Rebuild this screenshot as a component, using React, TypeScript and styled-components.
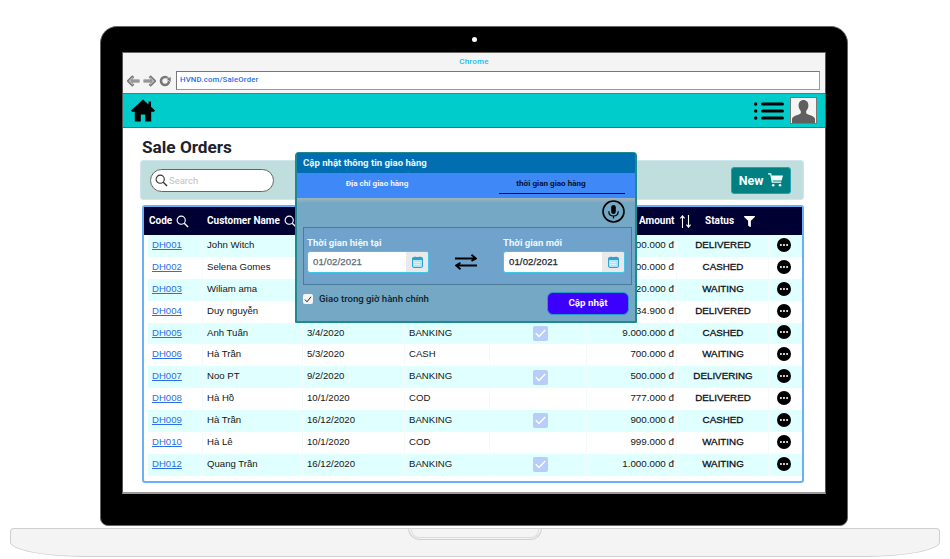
import React from "react";
import styled, { createGlobalStyle } from "styled-components";
import { FaFilter } from "react-icons/fa";

const Global = createGlobalStyle`
  html, body { margin: 0; padding: 0; background: #fff; }
  body { font-family: "Liberation Sans", Arial, sans-serif; overflow: hidden; }
  * { box-sizing: border-box; }
  svg { flex-shrink: 0; }
`;

const Stage = styled.div`
  width: 950px;
  height: 559px;
  padding-top: 26px;
  display: flex;
  flex-direction: column;
`;
const Laptop = styled.div`
  position: relative;
  width: 748px;
  height: 500px;
  margin-left: 100px;
  padding: 25px 21px 0;
  background: #000;
  border: 1px solid #666;
  border-radius: 17px 17px 8px 8px;
`;
const Camera = styled.span`
  position: absolute;
  left: 371px;
  top: 10px;
  width: 5px;
  height: 5px;
  border-radius: 50%;
  background: #fff;
`;
const Screen = styled.div`
  position: relative;
  width: 704px;
  height: 442px;
  background: #fff;
  border: 1px solid #555;
  border-bottom: 2px solid #999;
  border-top-color: #666;
  overflow: hidden;
`;
const BrowserBar = styled.div`
  height: 40px;
  background: #f4f4f4;
  display: flex;
  flex-direction: column;
`;
const BrowserTitle = styled.div`
  height: 18px;
  padding-top: 4px;
  text-align: center;
  font: 500 8px/9px Roboto, sans-serif;
  letter-spacing: 0.2px;
  color: #16bdf0;
`;
const AddressRow = styled.div`
  display: flex;
  align-items: center;
  gap: 2px;
  padding: 0 5px 0 4px;
`;
const NavGlyphs = styled.div`
  display: flex;
  align-items: center;
  gap: 3px;
  margin-right: 3px;
`;
const Address = styled.div`
  flex: 1;
  height: 19px;
  background: #fff;
  border: 1px solid #777;
  border-bottom: 1.5px solid #999;
  border-right-color: #999;
  padding-left: 3px;
  font: 500 7.8px/16px Roboto, sans-serif;
  letter-spacing: 0.15px;
  color: #1b6fe8;
`;
const Nav = styled.div`
  height: 35px;
  background: #00cccc;
  border-top: 1px solid #2b8c8c;
  border-bottom: 1px solid #2f7a7a;
  display: flex;
  align-items: center;
  justify-content: space-between;
  padding: 0 8px 0 8px;
`;
const NavRight = styled.div`
  display: flex;
  align-items: center;
  gap: 6px;
`;
const Avatar = styled.div`
  width: 27px;
  height: 27px;
  background: #f4f4f4;
  border: 1px solid #777;
  display: flex;
  overflow: hidden;
`;
const Main = styled.div`
  padding: 7px 21px 0 17px;
`;
const Title = styled.h1`
  margin: 0 0 1px 2px;
  height: 24px;
  font: 700 17.2px/24px Roboto, sans-serif;
  color: #1c2230;
`;
const Toolbar = styled.div`
  height: 40px;
  background: #bfdedd;
  border: 1px solid #cfe6ef;
  border-radius: 3px;
  display: flex;
  align-items: center;
  justify-content: space-between;
  padding: 0 12px 0 9px;
`;
const SearchBox = styled.div`
  width: 124px;
  height: 23px;
  background: #fff;
  border: 1px solid #666;
  border-radius: 12px;
  display: flex;
  align-items: center;
  gap: 1px;
  padding-left: 4px;
  font: 400 9.5px Roboto, sans-serif;
  color: #c0c0c0;
`;
const NewButton = styled.div`
  width: 60px;
  height: 27px;
  background: #008080;
  border: 1px solid #2b9fb0;
  border-radius: 3px;
  display: flex;
  align-items: center;
  justify-content: center;
  gap: 5px;
  font: 700 12.5px Roboto, sans-serif;
  color: #f2ffff;
`;
const TableBox = styled.div`
  margin: 5px 0 0 2px;
  height: 278px;
  width: 662px;
  border: 2px solid #6ab0f8;
  border-radius: 3px;
  background: #fff;
`;
const columns = "59px 100px 102px 85px 97px 90px 92px 33px";
const HeadRow = styled.div`
  display: grid;
  grid-template-columns: ${columns};
  height: 28px;
  background: #000033;
  color: #fff;
  font: 700 10px/28px Roboto, sans-serif;
`;
const HeadCell = styled.div<{ $pad?: number; $gap?: number }>`
  display: flex;
  align-items: center;
  gap: ${(p) => p.$gap ?? 4}px;
  padding-left: ${(p) => p.$pad ?? 0}px;
  white-space: nowrap;
`;
const Row = styled.div<{ $odd: boolean }>`
  display: grid;
  grid-template-columns: 55px 100px 102px 85px 97px 90px 92px 29px;
  height: 21.88px;
  margin-left: 4px;
  background: ${(p) => (p.$odd ? "#e0ffff" : "#fff")};
  font: 400 9.6px/20px "Liberation Sans", Arial, sans-serif;
  color: #151515;
`;
const Cell = styled.div<{ $pad?: number }>`
  padding-left: ${(p) => p.$pad ?? 4}px;
  border-right: 1px solid #f4f9f9;
  white-space: nowrap;
  overflow: hidden;
`;
const CodeLink = styled.a`
  color: #2a6fe6;
  text-decoration: underline;
`;
const CheckCell = styled(Cell)`
  display: flex;
  align-items: center;
  justify-content: center;
  padding: 0 0 0 5px;
`;
const CheckMark = styled.span`
  width: 15px;
  height: 15px;
  border-radius: 2px;
  background: #b9cdfb;
  display: flex;
  align-items: center;
  justify-content: center;
`;
const AmountCell = styled(Cell)`
  text-align: right;
  padding-right: 2px;
  padding-left: 0;
  font-size: 9.8px;
`;
const StatusCell = styled(Cell)`
  text-align: center;
  padding-left: 1px;
  font-size: 9.8px;
  -webkit-text-stroke: 0.3px #101018;
  color: #101018;
`;
const ActionCell = styled.div`
  display: flex;
  align-items: center;
  justify-content: center;
  padding-bottom: 2px;
`;

/* Modal overlay */
const Modal = styled.div`
  position: absolute;
  left: 172px;
  top: 99px;
  width: 342px;
  height: 171px;
  background: #74a8c4;
  border: 2px solid #1d8a90;
  border-top-width: 1px;
  border-radius: 4px 4px 1px 1px;
  display: flex;
  flex-direction: column;
`;
const ModalHead = styled.div`
  height: 20px;
  background: #006eb0;
  padding-left: 6px;
  font: 700 9.6px/20px Roboto, sans-serif;
  color: #e8f6ff;
`;
const Tabs = styled.div`
  height: 25px;
  background: #3f88f8;
  display: grid;
  grid-template-columns: 202px 126px;
`;
const Tab = styled.div<{ $active?: boolean }>`
  height: 21px;
  text-align: center;
  font: 700 8.1px/21px Roboto, sans-serif;
  padding-right: ${(p) => (p.$active ? 22 : 42)}px;
  color: ${(p) => (p.$active ? "#06122e" : "#f2f6ff")};
  border-bottom: ${(p) => (p.$active ? "1px solid #031030" : "none")};
`;
const ModalBody = styled.div`
  flex: 1;
  position: relative;
  padding: 2px 4px 0 6px;
  background: linear-gradient(#a3b4bd 0, #74a8c4 5px);
  display: flex;
  flex-direction: column;
`;
const MicRow = styled.div`
  display: flex;
  justify-content: flex-end;
  height: 27px;
  padding-right: 6px;
`;
const TimeBox = styled.div`
  height: 58px;
  width: 329px;
  background: #6fa3cc;
  border: 1px solid #4a7c98;
  padding: 8px 6px 0 3px;
  display: flex;
  justify-content: space-between;
  align-items: flex-start;
`;
const Field = styled.div`
  width: 122px;
`;
const FieldLabel = styled.div`
  font: 700 9.6px/14px Roboto, sans-serif;
  color: #eef6ff;
  margin-bottom: 1px;
`;
const DateInput = styled.div<{ $dim?: boolean }>`
  height: 22px;
  background: #fff;
  border: 1px solid #40c4e8;
  border-radius: 3px;
  display: flex;
  justify-content: space-between;
  padding-left: 5px;
  font: 400 9.6px/20px "Liberation Sans", Arial, sans-serif;
  letter-spacing: 0.1px;
  -webkit-text-stroke: 0.25px ${(p) => (p.$dim ? "#606a74" : "#1c2430")};
  color: ${(p) => (p.$dim ? "#606a74" : "#1c2430")};
  overflow: hidden;
`;
const CalendarAddon = styled.div`
  width: 22px;
  background: #e9e9e9;
  display: flex;
  align-items: center;
  justify-content: center;
`;
const SwapSlot = styled.div`
  align-self: center;
  margin-top: 4px;
  display: flex;
`;
const FootRow = styled.div`
  display: flex;
  justify-content: space-between;
  align-items: flex-start;
  padding: 7px 0 0 0;
`;
const CheckLabel = styled.label`
  display: flex;
  align-items: center;
  gap: 6px;
  font: 500 9.6px/14px Roboto, sans-serif;
  color: #10202e;
`;
const Tick = styled.span`
  width: 10px;
  height: 10px;
  background: #f4f4f4;
  border-radius: 2px;
  display: flex;
  align-items: center;
  justify-content: center;
`;
const UpdateButton = styled.div`
  width: 82px;
  height: 23px;
  background: #3c00ff;
  border: 1px solid #2a9ac4;
  border-radius: 6px;
  text-align: center;
  font: 700 9.8px/20px Roboto, sans-serif;
  color: #f5f5ff;
  margin-right: 2px;
`;

/* Laptop base */
const Base = styled.div`
  position: relative;
  width: 930px;
  height: 29px;
  margin: 2px 0 0 10px;
  background: #f4f4f4;
  border: 1px solid #cfcfcf;
  border-radius: 4px 4px 75px 75px / 4px 4px 15px 15px;
`;
const Notch = styled.div`
  position: absolute;
  left: 397px;
  top: -1px;
  width: 134px;
  height: 12px;
  border: 1px solid #cfcfcf;
  border-top: none;
  border-radius: 0 0 12px 12px;
  &::after {
    content: "";
    position: absolute;
    left: 2px;
    right: 2px;
    top: 0;
    height: 9px;
    border: 1px solid #dcdcdc;
    border-top: none;
    border-radius: 0 0 8px 8px;
  }
`;

const Mag = ({ size = 13, color = "#fff" }: { size?: number; color?: string }) => (
  <svg width={size} height={size} viewBox="0 0 14 14" fill="none" stroke={color} strokeWidth="1.2">
    <circle cx="5.6" cy="5.6" r="4.4" />
    <path d="M8.9 8.9 13 13" strokeWidth="1.5" />
  </svg>
);
const ArrowGlyph = ({ flip }: { flip?: boolean }) => (
  <svg width="13" height="12" viewBox="0 0 13 12" style={flip ? { transform: "scaleX(-1)" } : undefined} fill="none">
    <path d="M12.5 6H2M6.300 1.200 1.500 6l4.800 4.800" stroke="#777" strokeWidth="3" strokeLinejoin="round" />
    <path d="M12 6H3M5.800 2.500 2.300 6l3.500 3.500" stroke="#b5b5b5" strokeWidth="1.200" />
  </svg>
);
const Reload = () => (
  <svg width="12" height="12" viewBox="0 0 12 12">
    <circle cx="6" cy="6" r="4" fill="none" stroke="#777" strokeWidth="2.600" />
    <path d="M7 3.600 12 1.800V7.400Z" fill="#777" stroke="#f4f4f4" strokeWidth="0.600" />
  </svg>
);
const Home = () => (
  <svg width="24" height="23" viewBox="0 0 24 23">
    <path d="M12 .5 0 11.500l1 1.200h2.800V22.500h6v-7h4.400v7h6V12.700H23l1-1.200-4-3.700V2.500h-2.500v3Z" fill="#000" />
  </svg>
);
const ListGlyph = () => (
  <svg width="30" height="18" viewBox="0 0 30 18" fill="#000">
    <circle cx="1.700" cy="2" r="1.700" />
    <circle cx="1.700" cy="9" r="1.700" />
    <circle cx="1.700" cy="16" r="1.700" />
    <rect x="7" y="0.400" width="23" height="3.200" rx="1.600" />
    <rect x="7" y="7.400" width="23" height="3.200" rx="1.600" />
    <rect x="7" y="14.400" width="23" height="3.200" rx="1.600" />
  </svg>
);
const Person = () => (
  <svg width="25" height="25" viewBox="0 0 25 25">
    <path d="M12.500 2c-3 0-4.900 2.300-4.900 5.500 0 2.300.9 4.200 2.200 5.400v2.300C9 16.700 2.500 17 1 20.500V25h23v-4.500c-1.500-3.500-8-3.800-8.800-5.300v-2.300c1.300-1.200 2.200-3.100 2.200-5.400C17.400 4.300 15.500 2 12.500 2Z" fill="#5f5f5f" />
  </svg>
);
const Cart = () => (
  <svg width="15" height="14" viewBox="0 0 15 14" fill="none">
    <path d="M0 .9h2.700l1.600 8.200h8.900" stroke="#f2ffff" strokeWidth="1.200" />
    <path d="M3.400 2.400H15l-1.400 5.100H4.300Z" fill="#f2ffff" />
    <circle cx="5.200" cy="12.200" r="1.300" fill="#f2ffff" />
    <circle cx="12" cy="12.200" r="1.300" fill="#f2ffff" />
  </svg>
);
const Sort = () => (
  <svg width="11" height="13" viewBox="0 0 11 13" fill="none" stroke="#fff" strokeWidth="1.100">
    <path d="M2.500 13V1M.4 3.300 2.500.8l2.100 2.500" />
    <path d="M8.500 0v12M6.400 9.700l2.100 2.500 2.100-2.500" />
  </svg>
);
const Dots = () => (
  <svg width="14" height="14" viewBox="0 0 14 14">
    <circle cx="7" cy="7" r="7" fill="#000" />
    <circle cx="3.900" cy="7" r="1.050" fill="#fff" />
    <circle cx="7" cy="7" r="1.050" fill="#fff" />
    <circle cx="10.100" cy="7" r="1.050" fill="#fff" />
  </svg>
);
const CheckIcon = () => (
  <svg width="11" height="9" viewBox="0 0 11 9" fill="none" stroke="#fff" strokeWidth="1.400">
    <path d="M.8 4.200 4 7.400 10.200 1" />
  </svg>
);
const Mic = () => (
  <svg width="23" height="23" viewBox="0 0 23 23" fill="none" stroke="#000" strokeWidth="1.600">
    <circle cx="11.500" cy="11.500" r="10.500" />
    <rect x="9.200" y="5" width="4.600" height="9" rx="2.300" fill="#000" stroke="none" />
    <path d="M6.800 11.200c0 3 2 4.800 4.700 4.800s4.700-1.800 4.700-4.800M11.500 16v2.500" strokeWidth="1.200" />
  </svg>
);
const Swap = () => (
  <svg width="22" height="16" viewBox="0 0 22 16" fill="none" stroke="#000" strokeWidth="1.800">
    <path d="M0 4.500h21M16.500.8 21 4.500 16.500 7" />
    <path d="M22 11.500H1M5.500 8.800 1 11.500l4.500 3.700" />
  </svg>
);
const Calendar = () => (
  <svg width="11" height="12" viewBox="0 0 11 12">
    <rect x="0.500" y="1.500" width="10" height="10" rx="1.500" fill="#b5e2f2" stroke="#2aa4cf" />
    <rect x="0.500" y="1.500" width="10" height="2.500" fill="#2aa4cf" />
    <path d="M3 .5v2M8 .5v2" stroke="#2aa4cf" />
    <path d="M2.500 6.500h6M2.500 8.500h6" stroke="#fff" strokeDasharray="1 1" />
  </svg>
);
const TinyTick = () => (
  <svg width="8" height="7" viewBox="0 0 8 7" fill="none" stroke="#222" strokeWidth="1">
    <path d="M1 3.600 3 5.800 7 .8" />
  </svg>
);

type Order = { code: string; name: string; date?: string; pay?: string; paid: boolean; amount: string; status: string };
const orders: Order[] = [
  { code: "DH001", name: "John Witch", paid: false, amount: "300.000 đ", status: "DELIVERED" },
  { code: "DH002", name: "Selena Gomes", paid: false, amount: "500.000 đ", status: "CASHED" },
  { code: "DH003", name: "Wiliam ama", paid: false, amount: "120.000 đ", status: "WAITING" },
  { code: "DH004", name: "Duy nguyễn", paid: false, amount: "234.900 đ", status: "DELIVERED" },
  { code: "DH005", name: "Anh Tuấn", date: "3/4/2020", pay: "BANKING", paid: true, amount: "9.000.000 đ", status: "CASHED" },
  { code: "DH006", name: "Hà Trần", date: "5/3/2020", pay: "CASH", paid: false, amount: "700.000 đ", status: "WAITING" },
  { code: "DH007", name: "Noo PT", date: "9/2/2020", pay: "BANKING", paid: true, amount: "500.000 đ", status: "DELIVERING" },
  { code: "DH008", name: "Hà Hồ", date: "10/1/2020", pay: "COD", paid: false, amount: "777.000 đ", status: "DELIVERED" },
  { code: "DH009", name: "Hà Trần", date: "16/12/2020", pay: "BANKING", paid: true, amount: "900.000 đ", status: "CASHED" },
  { code: "DH010", name: "Hà Lê", date: "10/1/2020", pay: "COD", paid: false, amount: "999.000 đ", status: "WAITING" },
  { code: "DH012", name: "Quang Trần", date: "16/12/2020", pay: "BANKING", paid: true, amount: "1.000.000 đ", status: "WAITING" },
];

export default function App() {
  return (
    <Stage>
      <Global />
      <Laptop>
        <Camera />
        <Screen>
          <BrowserBar>
            <BrowserTitle>Chrome</BrowserTitle>
            <AddressRow>
              <NavGlyphs>
                <ArrowGlyph />
                <ArrowGlyph flip />
                <Reload />
              </NavGlyphs>
              <Address>HVND.com/SaleOrder</Address>
            </AddressRow>
          </BrowserBar>
          <Nav>
            <Home />
            <NavRight>
              <ListGlyph />
              <Avatar>
                <Person />
              </Avatar>
            </NavRight>
          </Nav>
          <Main>
            <Title>Sale Orders</Title>
            <Toolbar>
              <SearchBox>
                <Mag size={13} color="#333" />
                Search
              </SearchBox>
              <NewButton>
                New
                <Cart />
              </NewButton>
            </Toolbar>
            <TableBox>
              <HeadRow>
                <HeadCell $pad={5}>
                  Code <Mag />
                </HeadCell>
                <HeadCell $pad={4}>
                  Customer Name <Mag />
                </HeadCell>
                <HeadCell />
                <HeadCell />
                <HeadCell />
                <HeadCell $pad={52} $gap={6}>
                  Amount <Sort />
                </HeadCell>
                <HeadCell $pad={28} $gap={10}>
                  Status <FaFilter size={11} color="#fff" />
                </HeadCell>
                <HeadCell />
              </HeadRow>
              {orders.map((o, i) => (
                <Row key={o.code} $odd={i % 2 === 0}>
                  <Cell>
                    <CodeLink>{o.code}</CodeLink>
                  </Cell>
                  <Cell>{o.name}</Cell>
                  <Cell>{o.date}</Cell>
                  <Cell>{o.pay}</Cell>
                  <CheckCell>
                    {o.paid && (
                      <CheckMark>
                        <CheckIcon />
                      </CheckMark>
                    )}
                  </CheckCell>
                  <AmountCell>{o.amount}</AmountCell>
                  <StatusCell>{o.status}</StatusCell>
                  <ActionCell>
                    <Dots />
                  </ActionCell>
                </Row>
              ))}
            </TableBox>
          </Main>
          <Modal>
            <ModalHead>Cập nhật thông tin giao hàng</ModalHead>
            <Tabs>
              <Tab>Địa chỉ giao hàng</Tab>
              <Tab $active>thời gian giao hàng</Tab>
            </Tabs>
            <ModalBody>
              <MicRow>
                <Mic />
              </MicRow>
              <TimeBox>
                <Field>
                  <FieldLabel>Thời gian hiện tại</FieldLabel>
                  <DateInput $dim>
                    01/02/2021
                    <CalendarAddon>
                      <Calendar />
                    </CalendarAddon>
                  </DateInput>
                </Field>
                <SwapSlot>
                  <Swap />
                </SwapSlot>
                <Field>
                  <FieldLabel>Thời gian mới</FieldLabel>
                  <DateInput>
                    01/02/2021
                    <CalendarAddon>
                      <Calendar />
                    </CalendarAddon>
                  </DateInput>
                </Field>
              </TimeBox>
              <FootRow>
                <CheckLabel>
                  <Tick>
                    <TinyTick />
                  </Tick>
                  Giao trong giờ hành chính
                </CheckLabel>
                <UpdateButton>Cập nhật</UpdateButton>
              </FootRow>
            </ModalBody>
          </Modal>
        </Screen>
      </Laptop>
      <Base>
        <Notch />
      </Base>
    </Stage>
  );
}
